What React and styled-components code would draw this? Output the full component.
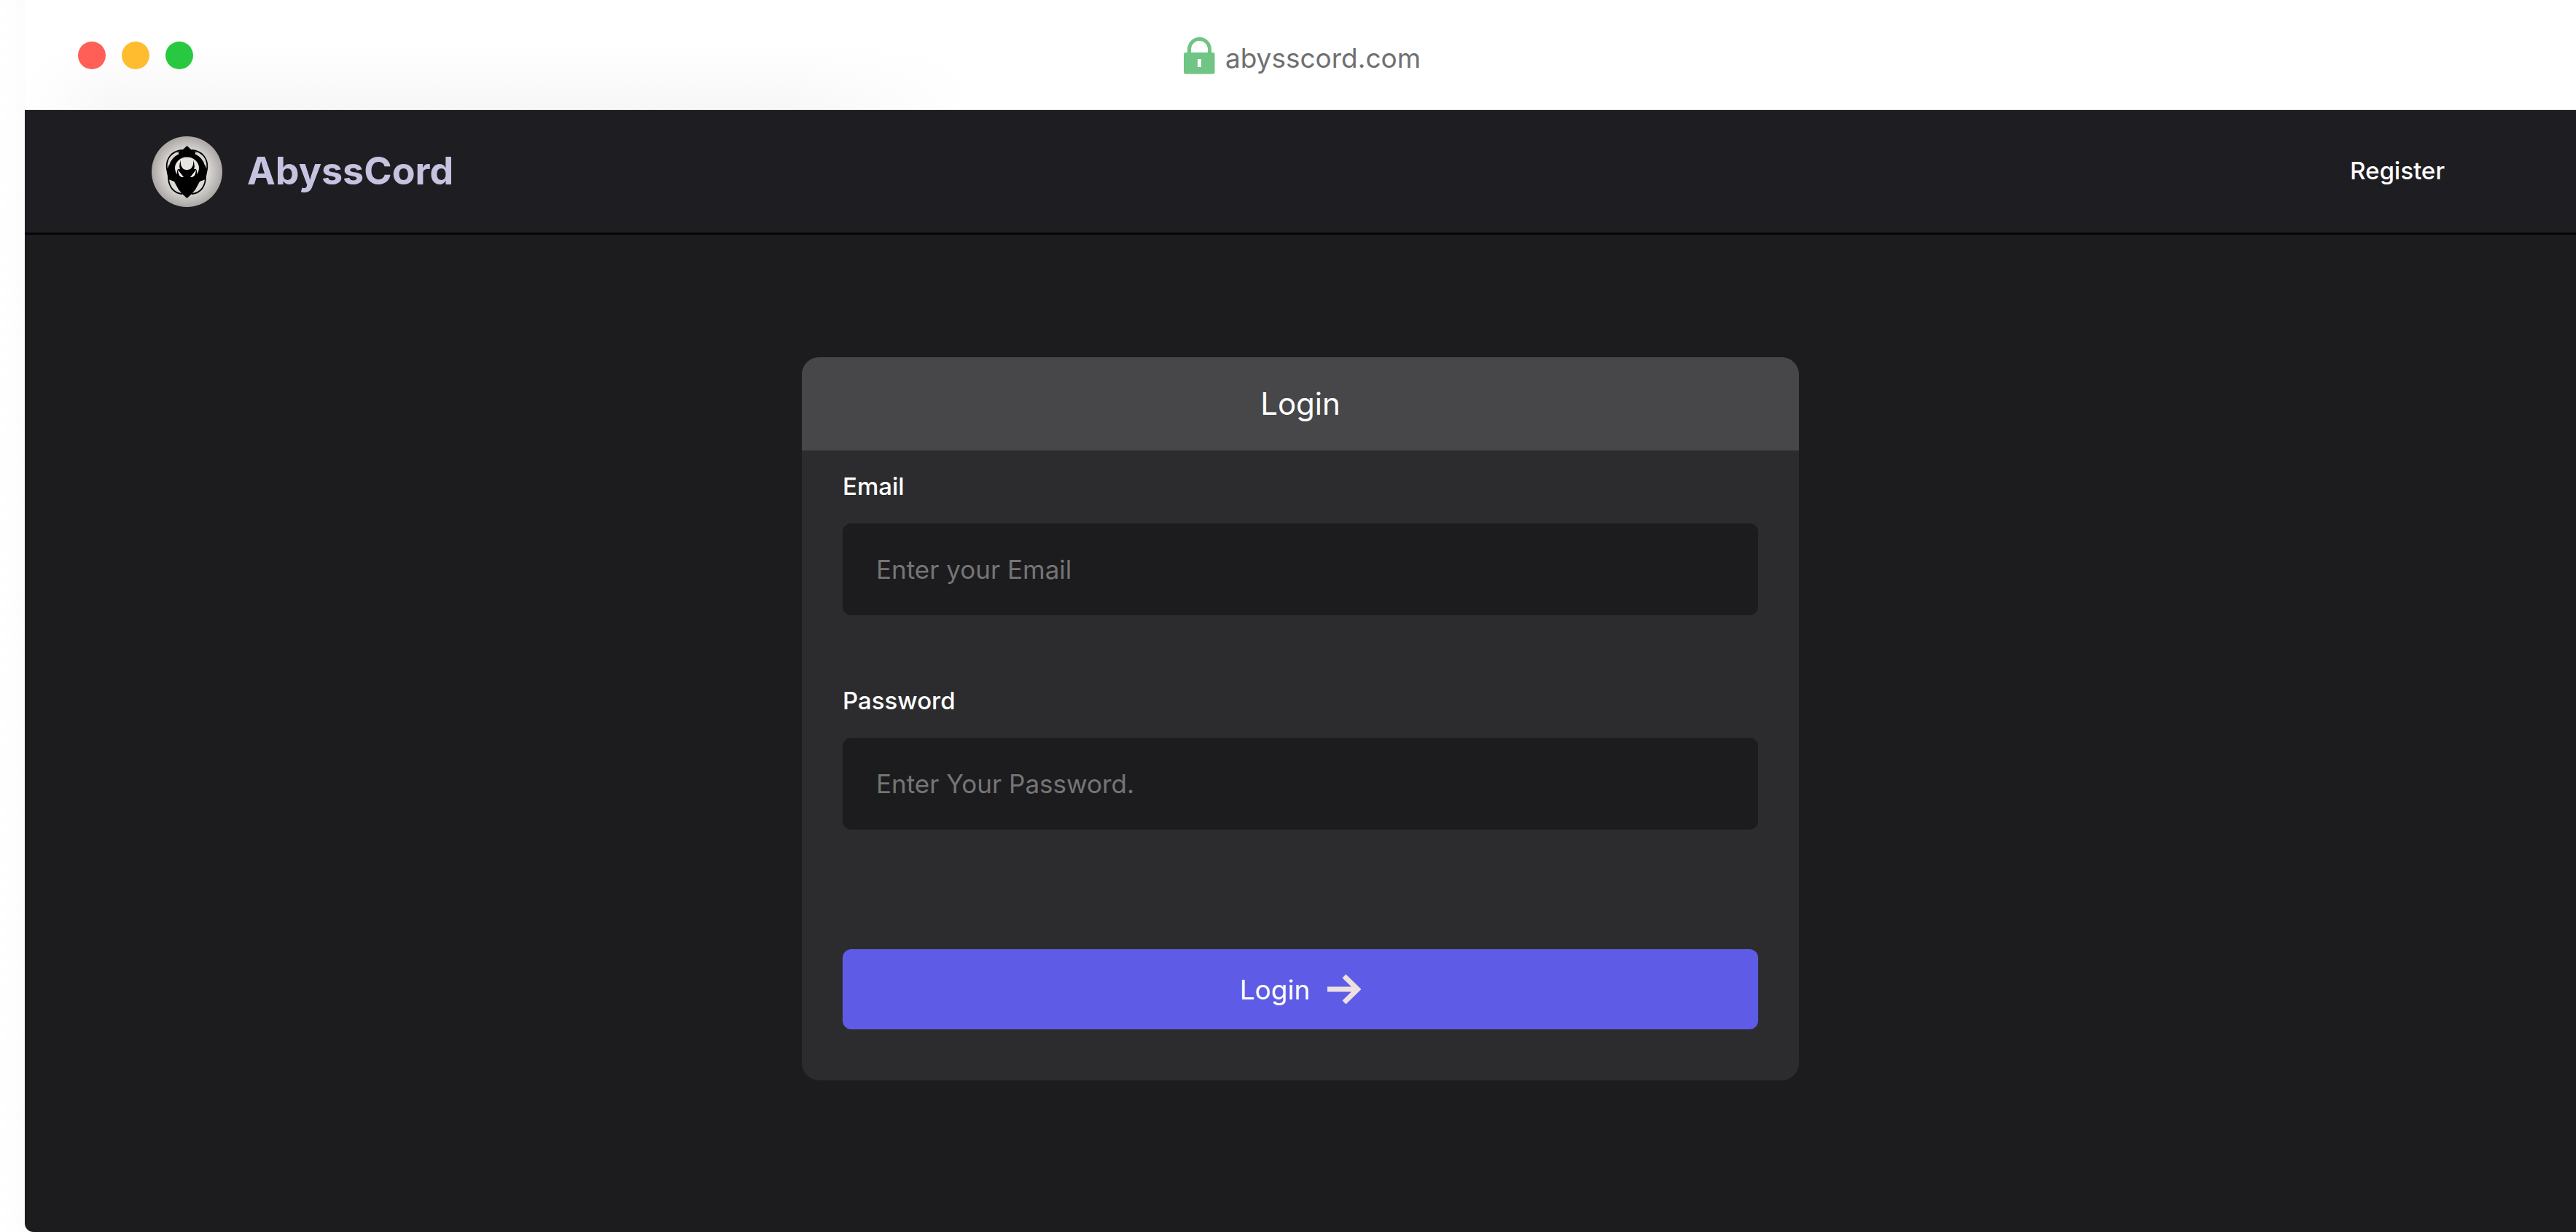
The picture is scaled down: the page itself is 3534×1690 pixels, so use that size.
import React from "react";
import styled, { createGlobalStyle } from "styled-components";

const GlobalStyle = createGlobalStyle`
  * { box-sizing: border-box; }
  html, body, #root { height: 100%; }
  body {
    margin: 0;
    background: #ffffff;
    font-family: Inter, "Open Sans", sans-serif;
  }
`;

const Browser = styled.div`
  display: flex;
  flex-direction: column;
  min-height: 100vh;
  padding-left: 34px;
  background: linear-gradient(to right, #ffffff, #fcfcfc) left / 34px 100% no-repeat;
`;

const TitleBar = styled.header`
  display: grid;
  grid-template-columns: 1fr auto 1fr;
  align-items: center;
  height: 151px;
  padding: 2px 68px 0 73px;
  border-bottom: 1px solid #dfe5e4;
  background:
    linear-gradient(to right, #ffffff, #ffffff00) left / 120px 100% no-repeat,
    linear-gradient(to left, #ffffff, #ffffff00) 1040px 0 / 260px 100% no-repeat,
    linear-gradient(to bottom, #ffffff 40%, #f7f7f7) left / 1300px 100% no-repeat,
    #ffffff;
`;

const Lights = styled.div`
  display: flex;
  gap: 22px;
`;

const Light = styled.span`
  width: 38px;
  height: 38px;
  border-radius: 50%;
  background: ${(p) => p.$color};
`;

const Address = styled.div`
  display: flex;
  align-items: flex-end;
  gap: 14px;
  color: #707070;
  font-size: 37px;
  line-height: 44px;
  svg { width: 43px; height: 51px; }
`;

const Site = styled.div`
  flex: 1;
  display: flex;
  flex-direction: column;
  background: #1c1c1e;
  border-bottom-left-radius: 12px;
  overflow: hidden;
`;

const Nav = styled.nav`
  display: flex;
  justify-content: space-between;
  align-items: center;
  height: 171px;
  padding: 0 180px 0 174px;
  background: #1e1d22;
  border-bottom: 3px solid #050506;
`;

const Brand = styled.a`
  display: flex;
  align-items: center;
  gap: 34px;
  color: #c5c3df;
  font-size: 52px;
  font-weight: 700;
  line-height: 60px;
  text-decoration: none;
  svg { width: 97px; height: 97px; }
`;

const NavLink = styled.a`
  padding-bottom: 2px;
  color: #ffffff;
  font-size: 33px;
  font-weight: 500;
  text-decoration: none;
`;

const Main = styled.main`
  display: flex;
  justify-content: center;
  padding: 168px 24px;
`;

const Card = styled.form`
  width: 100%;
  max-width: 1368px;
  border-radius: 24px;
  background: #2c2c2e;
  overflow: hidden;
`;

const CardTitle = styled.h1`
  margin: 0;
  background: #474749;
  color: #ffffff;
  font-size: 42px;
  font-weight: 400;
  line-height: 128px;
  text-align: center;
`;

const Fields = styled.div`
  display: flex;
  flex-direction: column;
  gap: 92px;
  padding: 24px 56px 70px;
`;

const Field = styled.div`
  display: flex;
  flex-direction: column;
  gap: 26px;
`;

const Label = styled.label`
  color: #ffffff;
  font-size: 33px;
  font-weight: 500;
  line-height: 50px;
`;

const Input = styled.input`
  width: 100%;
  height: 126px;
  padding: 0 46px;
  border: 0;
  border-radius: 12px;
  background: #1c1c1e;
  color: #ffffff;
  font: 400 35px Inter, "Open Sans", sans-serif;
  &::placeholder { color: #757575; opacity: 1; }
`;

const Submit = styled.button`
  display: flex;
  justify-content: center;
  align-items: center;
  gap: 24px;
  height: 110px;
  margin-top: 72px;
  border: 0;
  border-radius: 12px;
  background: #5e5ce6;
  color: #ffffff;
  font: 400 37px Inter, "Open Sans", sans-serif;
  svg { width: 46px; height: 42px; }
`;

const Lock = () => (
  <svg viewBox="0 0 43 51" aria-hidden="true">
    <path d="M7.5 23V17a14 14.5 0 0 1 28 0v6" fill="none" stroke="#70c585" strokeWidth="5" />
    <path
      fill="#70c585"
      fillRule="evenodd"
      d="M2.500 21h37.500a2.500 2.500 0 0 1 2.500 2.500v24.500a2.500 2.500 0 0 1-2.500 2.500h-37.500a2.500 2.500 0 0 1-2.500-2.500v-24.500a2.500 2.500 0 0 1 2.500-2.500zM19 30v11h5v-11z"
    />
  </svg>
);

const Logo = () => (
  <svg viewBox="0 0 97 97" aria-hidden="true">
    <defs>
      <radialGradient id="medallion">
        <stop offset="0" stopColor="#eeedeb" />
        <stop offset=".6" stopColor="#dad8d5" />
        <stop offset="1" stopColor="#aaa6a3" />
      </radialGradient>
    </defs>
    <circle cx="48.500" cy="48.500" r="48.500" fill="url(#medallion)" />
    <g fill="none" stroke="#000" strokeWidth="1.800">
      <path d="M42 19C28 20 19 30 21 45L23 55C23 69 30 78 42 79" />
      <path d="M55 19C69 20 78 30 76 45L74 55C74 69 67 78 55 79" />
    </g>
    <path
      fill="#000"
      d="M48.500 13L54 18Q66 23 71 34L76 46L74 59L66 62L60 73L55 79L48.500 85L42 79L37 73L31 62L23 59L21 46L26 34Q31 23 43 18Z"
    />
    <path
      fill="none"
      stroke="#dad8d5"
      strokeWidth="2.500"
      d="M37 23Q26 28 23 39M60 23Q71 28 74 39"
    />
    <ellipse cx="48.500" cy="43.500" rx="16.500" ry="15" fill="#e6e5e2" />
    <path
      fill="#000"
      d="M40 32Q37 41 39 45Q34 43 35 53L41 61H56L62 53Q63 43 58 45Q60 41 57 32Q58 39 55 43Q53 46 48.500 46Q44 46 42 43Q39 39 40 32Z"
    />
    <path fill="#fff" d="M36 46L44 56Q37 57 36 46ZM61 46L53 56Q60 57 61 46Z" />
  </svg>
);

const Arrow = () => (
  <svg viewBox="0 0 46 42" aria-hidden="true">
    <path d="M0 21H41M23 3L41.500 21L23 39" fill="none" stroke="#ece0e0" strokeWidth="7" />
  </svg>
);

function TextField({ id, label, ...rest }) {
  return (
    <Field>
      <Label htmlFor={id}>{label}</Label>
      <Input id={id} {...rest} />
    </Field>
  );
}

export default function App() {
  return (
    <>
      <GlobalStyle />
      <Browser>
        <TitleBar>
          <Lights>
            <Light $color="#ff5f57" />
            <Light $color="#febc2e" />
            <Light $color="#28c840" />
          </Lights>
          <Address>
            <Lock />
            <span>abysscord.com</span>
          </Address>
        </TitleBar>
        <Site>
          <Nav>
            <Brand href="#home">
              <Logo />
              <span>AbyssCord</span>
            </Brand>
            <NavLink href="#register">Register</NavLink>
          </Nav>
          <Main>
            <Card onSubmit={(e) => e.preventDefault()}>
              <CardTitle>Login</CardTitle>
              <Fields>
                <TextField id="email" label="Email" type="email" placeholder="Enter your Email" />
                <TextField id="password" label="Password" type="password" placeholder="Enter Your Password." />
                <Submit type="submit">
                  Login
                  <Arrow />
                </Submit>
              </Fields>
            </Card>
          </Main>
        </Site>
      </Browser>
    </>
  );
}
